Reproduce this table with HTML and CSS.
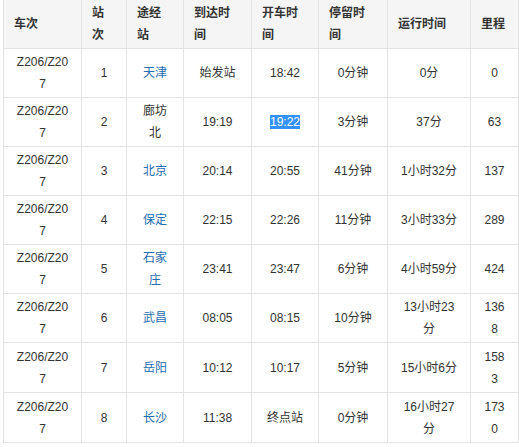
FILE: index.html
```html
<!DOCTYPE html>
<html lang="zh-CN">
<head>
<meta charset="utf-8">
<title>Z206/Z207</title>
<link rel="stylesheet" href="styles.css">
</head>
<body>
<table class="timetable">
  <colgroup>
    <col class="c-train"><col class="c-no"><col class="c-station"><col class="c-arr"><col class="c-dep"><col class="c-stay"><col class="c-run"><col class="c-km">
  </colgroup>
  <thead>
    <tr><th>车次</th><th>站次</th><th>途经站</th><th>到达时间</th><th>开车时间</th><th>停留时间</th><th>运行时间</th><th>里程</th></tr>
  </thead>
  <tbody>
    <tr><td>Z206/Z207</td><td>1</td><td><a class="link">天津</a></td><td>始发站</td><td>18:42</td><td>0分钟</td><td>0分</td><td>0</td></tr>
    <tr><td>Z206/Z207</td><td>2</td><td>廊坊北</td><td>19:19</td><td><span class="sel">19:22</span></td><td>3分钟</td><td>37分</td><td>63</td></tr>
    <tr><td>Z206/Z207</td><td>3</td><td><a class="link">北京</a></td><td>20:14</td><td>20:55</td><td>41分钟</td><td>1小时32分</td><td>137</td></tr>
    <tr><td>Z206/Z207</td><td>4</td><td><a class="link">保定</a></td><td>22:15</td><td>22:26</td><td>11分钟</td><td>3小时33分</td><td>289</td></tr>
    <tr><td>Z206/Z207</td><td>5</td><td><a class="link">石家庄</a></td><td>23:41</td><td>23:47</td><td>6分钟</td><td>4小时59分</td><td>424</td></tr>
    <tr><td>Z206/Z207</td><td>6</td><td><a class="link">武昌</a></td><td>08:05</td><td>08:15</td><td>10分钟</td><td>13小时23分</td><td>1368</td></tr>
    <tr class="tall"><td>Z206/Z207</td><td>7</td><td><a class="link">岳阳</a></td><td>10:12</td><td>10:17</td><td>5分钟</td><td>15小时6分</td><td>1583</td></tr>
    <tr class="tall"><td>Z206/Z207</td><td>8</td><td><a class="link">长沙</a></td><td>11:38</td><td>终点站</td><td>0分钟</td><td>16小时27分</td><td>1730</td></tr>
  </tbody>
</table>
</body>
</html>
```
FILE: styles.css
```css
html, body {
  margin: 0;
  padding: 0;
  background: #fff;
}
body {
  font-family: "Liberation Sans", Arial, "Noto Sans CJK SC", sans-serif;
  font-size: 12px;
  color: #333;
}
.timetable {
  table-layout: fixed;
  border-collapse: collapse;
  width: 516px;
  margin: -1px 0 0 3px;
}
.c-train { width: 78px; }
.c-no { width: 45px; }
.c-station { width: 57px; }
.c-arr { width: 68px; }
.c-dep { width: 67px; }
.c-stay { width: 69px; }
.c-run { width: 83px; }
.c-km { width: 48px; }

.timetable th,
.timetable td {
  border: 1px solid #e3e3e3;
  height: 49px;
  box-sizing: border-box;
  line-height: 22px;
  vertical-align: middle;
  word-break: break-all;
}
.timetable .tall td {
  height: 50px;
}
.timetable th {
  background: #f5f5f5;
  font-weight: bold;
  text-align: left;
  padding: 0 12px 0 10px;
  color: #333;
}
.timetable td {
  text-align: center;
  padding: 0 12px;
}
.link {
  color: #1f6cb0;
  text-decoration: none;
}
.sel {
  background: #3390ff;
  color: #fff;
}
```
